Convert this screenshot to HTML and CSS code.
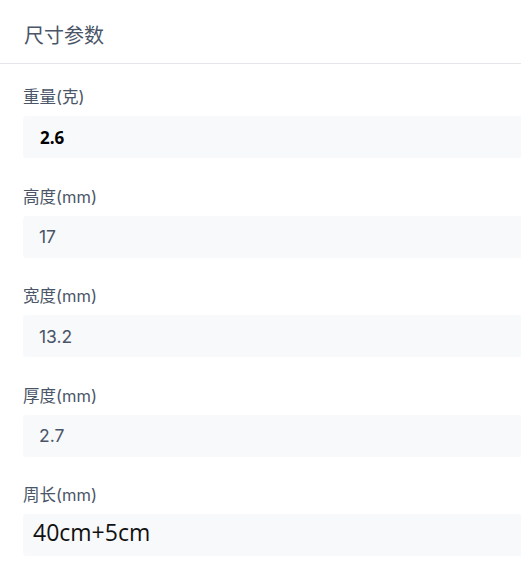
FILE: index.html
```html
<!DOCTYPE html>
<html lang="zh">
<head>
<meta charset="utf-8">
<link rel="stylesheet" href="styles.css">
</head>
<body>
<div class="panel">
  <div class="header">尺寸参数</div>
  <div class="fields">
    <div class="field">
      <div class="label">重量(克)</div>
      <div class="input"><span class="val bold">2.6</span></div>
    </div>
    <div class="field">
      <div class="label">高度(mm)</div>
      <div class="input"><span class="val">17</span></div>
    </div>
    <div class="field">
      <div class="label">宽度(mm)</div>
      <div class="input"><span class="val">13.2</span></div>
    </div>
    <div class="field">
      <div class="label">厚度(mm)</div>
      <div class="input"><span class="val">2.7</span></div>
    </div>
    <div class="field">
      <div class="label">周长(mm)</div>
      <div class="input"><span class="val big">40cm+5cm</span></div>
    </div>
  </div>
</div>
</body>
</html>
```
FILE: styles.css
```css
html, body {
  margin: 0;
  padding: 0;
  background: #ffffff;
  overflow: hidden;
}
body {
  font-family: "Inter", "Noto Sans CJK SC", sans-serif;
  width: 521px;
}
.header {
  height: 64px;
  box-sizing: border-box;
  padding: 22px 0 0 24px;
  font-size: 20px;
  line-height: 28px;
  color: #4a5568;
  border-bottom: 1px solid #e4e6ea;
}
.fields {
  padding: 22px 0 0 23px;
}
.field {
  margin-bottom: 27.5px;
}
.label {
  font-size: 16.5px;
  line-height: 22px;
  color: #4a5568;
  margin-bottom: 8px;
}
.input {
  width: 520px;
  height: 42px;
  background: #f8f9fb;
  border-radius: 4px;
  display: flex;
  align-items: center;
  padding-left: 16px;
  box-sizing: border-box;
}
.val {
  font-size: 17.5px;
  color: #4a5568;
}
.val.bold {
  font-family: "Open Sans", "Noto Sans", sans-serif;
  font-size: 17px;
  font-weight: 700;
  color: #000000;
  padding-left: 1px;
}
.val.big {
  font-family: "Open Sans", "Noto Sans", sans-serif;
  font-size: 23px;
  color: #111111;
  margin-left: -6px;
  margin-top: -7px;
}
```
